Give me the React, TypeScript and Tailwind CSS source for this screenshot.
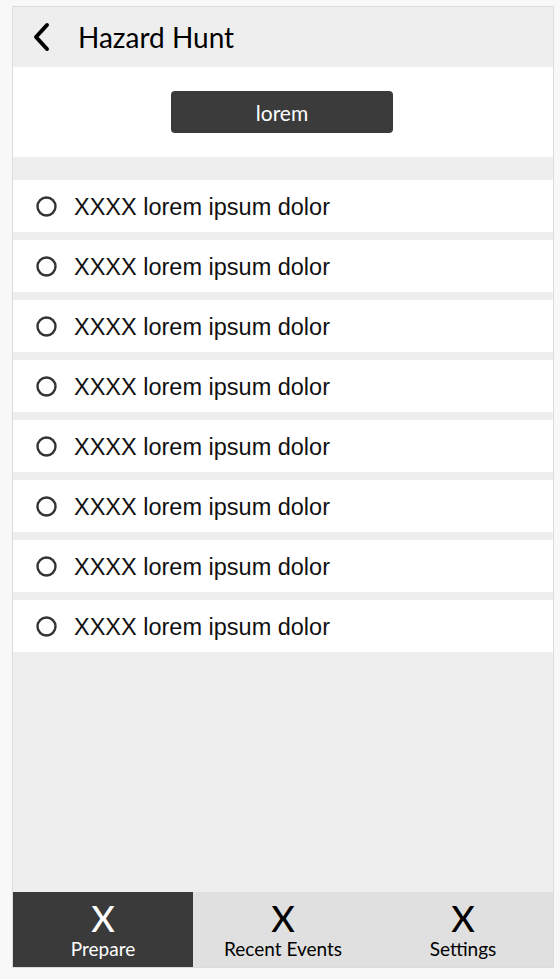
import React from 'react';

const items = Array.from({ length: 8 }, () => 'XXXX lorem ipsum dolor');

const tabs = [
  { label: 'Prepare', active: true },
  { label: 'Recent Events', active: false },
  { label: 'Settings', active: false },
];

export default function App() {
  return (
    <div className="h-[979px] w-[560px] bg-[#f8f8f8] pt-[6px] pl-[12px]">
      <div className="flex h-[962px] w-[542px] flex-col border border-[#dcdcdc] bg-[#eeeeee]">
        {/* header */}
        <div className="flex h-[60px] items-center bg-[#eeeeee] pl-[20px]">
          <svg width="18" height="30" viewBox="0 0 18 30" className="mr-[27px]">
            <polyline
              points="14,3 3,15 14,27"
              fill="none"
              stroke="#000"
              strokeWidth="4"
              strokeLinecap="round"
              strokeLinejoin="round"
            />
          </svg>
          <span className="font-['Lato',sans-serif] text-[28px] leading-none text-black">Hazard Hunt</span>
        </div>

        {/* action bar */}
        <div className="flex h-[90px] items-center justify-center bg-white">
          <button className="mr-[2px] flex h-[42px] w-[222px] items-center justify-center rounded-[4px] bg-[#3b3b3b] pt-[2px] font-['Lato',sans-serif] text-[21px] text-white">
            lorem
          </button>
        </div>

        {/* list */}
        <div className="mt-[23px] flex flex-col gap-[8px]">
          {items.map((text, i) => (
            <div key={i} className="flex h-[52px] items-center bg-white pl-[23px]">
              <svg width="21" height="21" viewBox="0 0 21 21" className="mr-[17px] mt-[1px]">
                <circle cx="10.5" cy="10.5" r="9" fill="none" stroke="#333" strokeWidth="2.4" />
              </svg>
              <span className="pt-[4px] font-['Liberation_Sans',Arial,Helvetica,sans-serif] text-[23.5px] text-[#111]">
                {text}
              </span>
            </div>
          ))}
        </div>

        <div className="flex-1" />

        {/* bottom nav */}
        <div className="flex h-[75px]">
          {tabs.map((t) => (
            <div
              key={t.label}
              className={`flex w-[180px] flex-col items-center justify-center font-['Lato',sans-serif] ${
                t.active ? 'bg-[#3a3a3a] text-white' : 'bg-[#e0e0e0] text-black'
              }`}
            >
              <span className="text-[36px] font-medium leading-[36px]">X</span>
              <span className="mt-[2px] text-[19px] leading-[22px]">{t.label}</span>
            </div>
          ))}
        </div>
      </div>
    </div>
  );
}
